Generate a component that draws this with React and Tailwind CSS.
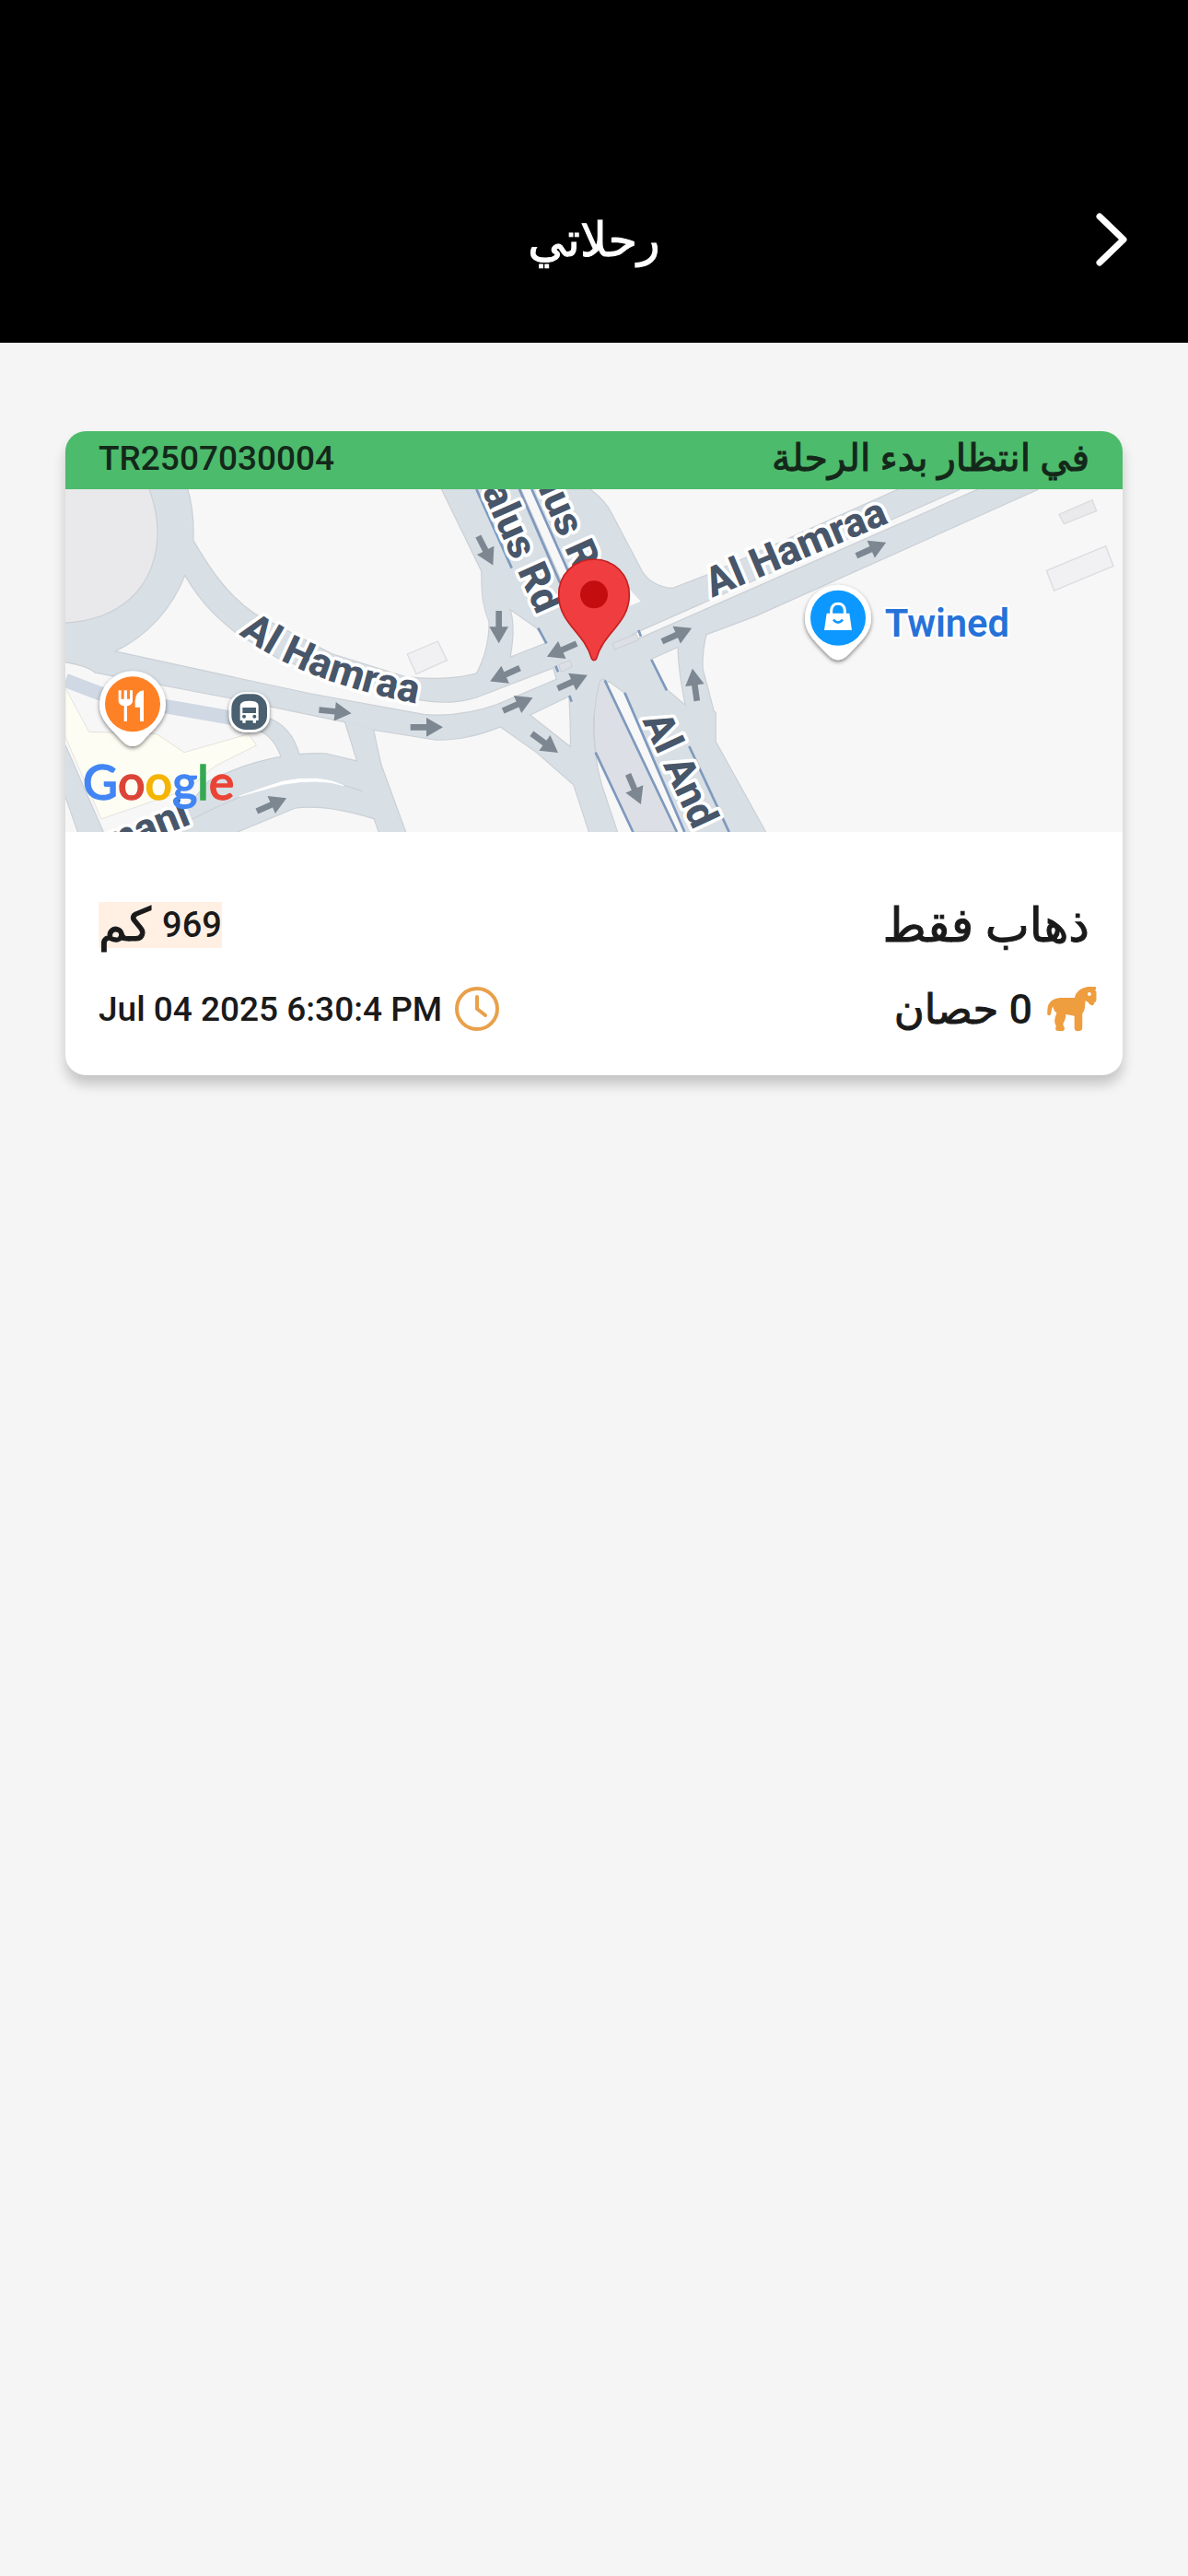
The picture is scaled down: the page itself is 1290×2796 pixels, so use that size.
const ROADS = [
  'M308 213 Q340 300 334 380 C320 540 210 640 33 650 V775 Q100 785 130 808 L200 822 L190 742 C300 690 380 600 422 490 C480 590 540 640 590 680 L740 770 L1190 898 Q1290 915 1370 890 L1630 790 L1700 760 L1650 700 L1600 715 L1480 762 L1370 815 Q1270 840 1140 825 L900 750 L650 620 C560 560 500 470 448 380 Q452 290 430 213Z',
  'M160 735 L560 822 L830 880 L1200 948 Q1320 958 1440 915 L1700 805 L1800 800 L1675 885 L1550 945 L1450 985 Q1340 1030 1240 1028 L1035 995 L945 970 L560 890 L130 808Z',
  'M1260 213 L1390 480 C1390 560 1395 600 1415 645 Q1415 740 1370 820 L1480 765 Q1500 650 1478 600 L1570 665 L1610 720 L1640 760 L1760 770 L1800 640 L1650 520 L1515 213Z',
  'M1555 213 H1740 Q1790 250 1810 290 L1910 480 Q1940 530 2010 537 L2120 495 L2750 213 H2945 L1910 670 L1820 710 L1740 700 L1680 500Z',
  'M1740 800 L1800 740 L1915 695 L3010 213 H3200 L2280 625 L2120 685 L1940 765 L1800 840Z',
  'M2030 722 Q2030 800 2055 920 L2080 980 L2150 960 Q2130 880 2108 800 Q2105 740 2120 685Z',
  'M1880 770 L1940 765 L1990 865 L2055 920 L2150 940 V1035 L2313 1329 H2050 L1855 875 L1780 820Z',
  'M1450 985 L1570 1070 L1690 1175 L1740 1329 H1830 L1780 1180 Q1750 1080 1752 960 L1775 835 L1700 760 L1675 885 Q1680 960 1680 1055 L1540 945Z',
  'M1600 715 L1850 640 L1930 770 L1785 832 L1750 860 L1640 850Z',
  'M945 970 L985 1100 L1040 1285 L1055 1329 H1140 L1060 1110 L1035 995Z',
  'M500 1165 Q690 1070 880 1075 L985 1100 L1060 1110 L1080 1290 L1040 1285 Q880 1235 780 1250 L590 1329 H380 L430 1250Z',
  'M33 1050 L155 1329 H75 L33 1210Z',
  'M690 958 Q770 985 795 1082 L740 1095 Q720 1020 660 995Z',
];

const ARROWS = [
  [912, 937, 6], [1210, 988, 0], [705, 1240, -24], [1402, 413, 63], [1445, 662, 90],
  [1650, 737, 156], [1465, 817, 156], [1685, 840, -24], [1507, 913, -24], [1595, 1040, 36],
  [2025, 687, -24], [2083, 850, -98], [1887, 1190, 67], [2658, 408, -24],
];

const LANE_LINES =
  'M1372 213 L1487 470 M1512 213 L1645 520 M1552 213 L1675 490 M1573 665 L1600 715 M1630 788 L1638 808 M1675 885 L1682 905 M1900 672 L1908 692 M1942 768 L1992 868 M1790 835 L2025 1329 M1855 875 L2050 1329 M2065 1050 L2195 1329 M1760 1070 L1882 1329';

function PlacePin({ x, y, color, children }) {
  return (
    <g transform={`translate(${x} ${y})`}>
      <path
        d="M0 -108 A108 108 0 0 1 108 0 C108 50 75 75 35 118 Q0 156 -35 118 C-75 75 -108 50 -108 0 A108 108 0 0 1 0 -108Z"
        fill="#fff"
        filter="url(#pinShadow)"
      />
      <circle r="90" fill={color} />
      {children}
    </g>
  );
}

function TripMap() {
  return (
    <svg viewBox="33 213 3444 1116" direction="ltr" className="block w-full [direction:ltr]" role="img" aria-label="Google map">
      <defs>
        <filter id="pinShadow" x="-30%" y="-30%" width="160%" height="160%">
          <feDropShadow dx="0" dy="6" stdDeviation="7" floodColor="#000" floodOpacity="0.5" />
        </filter>
        <path id="hamraaWest" d="M598 684 Q820 855 1260 925" />
      </defs>
      <rect x="33" y="213" width="3444" height="1116" fill="#f7f7f8" />
      <path d="M33 213 H308 Q340 300 334 380 C320 540 210 640 33 650Z" fill="#e9e9eb" />
      <path
        d="M33 860 L110 1003 L330 1010 L420 1070 L630 1010 L655 1047 L520 1115 L430 1190 L150 1287 L33 1020Z"
        fill="#fefdf3"
        stroke="#e4e3dc"
        strokeWidth="3"
      />
      <path d="M33 835 L145 878 L360 920 L600 962 L690 985" fill="none" stroke="#cfd8e3" strokeWidth="46" />
      <g fill="#f1f1f3" stroke="#dcdce0" strokeWidth="4">
        <path d="M1147 750 L1246 708 L1276 770 L1176 815Z" />
        <path d="M3270 295 L3378 248 L3392 284 L3286 326Z" fill="#eaeaec" />
        <path d="M3229 478 L3422 398 L3447 463 L3254 543Z" />
      </g>
      <g fill="#d8dfe5" stroke="#cbd0d5" strokeWidth="7" strokeLinejoin="round">
        {ROADS.map((d) => <path key={d} d={d} />)}
      </g>
      <g fill="#d8dfe5">
        {ROADS.map((d) => <path key={d} d={d} />)}
      </g>
      <path d="M1775 835 L1790 832 L2025 1329 H1882 L1760 1070 Q1745 940 1775 835Z" fill="#dcdfe5" stroke="#c9ced4" strokeWidth="3" />
      <path d="M1872 540 L1907 578 L1860 598Z" fill="#fafafa" />
      <path d="M1815 715 L1893 684 L1900 704 L1822 735Z M1640 785 L1676 770 L1684 790 L1648 808Z" fill="#dcdfe4" stroke="#cbd0d5" strokeWidth="3" />
      <path d="M440 1290 Q600 1210 720 1170 Q860 1140 1000 1196" fill="none" stroke="#c8cdd3" strokeWidth="3" />
      <path d="M600 1213 Q690 1180 740 1165 Q860 1140 940 1178 Q860 1152 740 1174Z" fill="#fff" stroke="#fff" strokeWidth="3" />
      <path d={LANE_LINES} fill="none" stroke="#7f99bd" strokeWidth="8" />
      <g fill="#7c8791">
        {ARROWS.map(([x, y, a]) => (
          <path key={`${x}-${y}`} transform={`translate(${x} ${y}) rotate(${a})`} d="M-53 -10 H-1 V-31 L53 0 L-1 31 V10 H-53Z" />
        ))}
      </g>
      <g
        className="font-['Roboto',sans-serif] font-extrabold"
        fontSize="133"
        fill="#48566a"
        stroke="#fff"
        strokeWidth="22"
        strokeLinejoin="round"
        paintOrder="stroke"
      >
        <text><textPath href="#hamraaWest">Al Hamraa</textPath></text>
        <text transform="translate(2140 566) rotate(-23)">Al Hamraa</text>
        <text transform="translate(1570 624) rotate(66)" textAnchor="end">alus Rd</text>
        <text transform="translate(1724 550) rotate(66)" textAnchor="end">lus Rd</text>
        <text transform="translate(1912 966) rotate(65)">Al And</text>
        <text transform="translate(446 1302) rotate(-22)" textAnchor="end">mani</text>
      </g>
      <text x="90" y="1224" fontSize="156" strokeWidth="4" className="font-['Lato',sans-serif] font-medium">
        <tspan fill="#4285f4" stroke="#4285f4">G</tspan>
        <tspan fill="#db4437" stroke="#db4437">o</tspan>
        <tspan fill="#f4b400" stroke="#f4b400">o</tspan>
        <tspan fill="#4285f4" stroke="#4285f4">g</tspan>
        <tspan fill="#34a853" stroke="#34a853">l</tspan>
        <tspan fill="#ea4335" stroke="#ea4335">e</tspan>
      </text>
      <PlacePin x={252} y={913} color="#ff8126">
        <g fill="#fff">
          <path d="M-46 -45 h9 v28 h9 v-28 h10 v28 h9 v-28 h9 v34 q0 13 -18 17 v50 h-10 v-50 q-18 -4 -18 -17Z" />
          <path d="M36 -45 V56 H24 V10 H8 V-10 Q10 -42 36 -45Z" />
        </g>
      </PlacePin>
      <PlacePin x={2550} y={632} color="#0c98ff">
        <path d="M-37 -15 H37 L45 40 H-45Z" fill="#fff" />
        <path d="M-22 -12 V-24 Q-20 -46 0 -46 Q20 -46 22 -24 V-12" fill="none" stroke="#fff" strokeWidth="9" />
        <path d="M-15 6 Q0 24 15 6" fill="none" stroke="#0c98ff" strokeWidth="8" />
      </PlacePin>
      <g transform="translate(632 938)">
        <rect x="-66" y="-64" width="132" height="130" rx="52" fill="#fff" filter="url(#pinShadow)" />
        <rect x="-58" y="-58" width="116" height="116" rx="46" fill="#4a6070" />
        <path d="M-30 28 V-20 Q-30 -36 0 -36 Q30 -36 30 -20 V28 H22 V36 H12 V28 H-12 V36 H-22 V28Z" fill="#fff" />
        <path d="M-22 -14 H22 V4 H-22Z" fill="#4a6070" />
        <circle cx="-17" cy="15" r="6" fill="#4a6070" />
        <circle cx="17" cy="15" r="6" fill="#4a6070" />
      </g>
      <text
        x="2702"
        y="693"
        fontSize="125"
        fill="#2672d9"
        stroke="#fff"
        strokeWidth="14"
        paintOrder="stroke"
        className="font-['Roboto',sans-serif] font-semibold"
      >
        Twined
      </text>
      <path
        d="M1755 441 C1820 441 1870 492 1870 557 C1870 650 1784 682 1763 764 Q1755 776 1747 764 C1726 682 1640 650 1640 557 C1640 492 1690 441 1755 441Z"
        fill="#f03e40"
        stroke="#c5201f"
        strokeWidth="5"
      />
      <circle cx="1755" cy="556" r="45" fill="#c30d0e" />
    </svg>
  );
}

function HorseIcon() {
  return (
    <svg viewBox="0 0 162 145" className="h-12 w-[54px]" fill="#ee9d3f" aria-hidden="true">
      <path
        fillRule="evenodd"
        d="M158 0 H132 Q94 8 90 36 H42 Q14 38 4 58 Q0 68 0 90 Q1 95 8 94 Q13 92 13 84 Q13 72 19 64 Q20 78 31 86 Q24 102 24 112 Q24 120 29 128 L27 138 Q28 145 35 145 H51 Q59 142 56 134 Q51 126 52 120 Q60 110 61 91 Q74 93 89 96 V136 Q90 145 98 145 H107 Q115 143 115 135 V88 Q124 78 124 57 L125 46 L133 50 Q138 60 146 61 Q155 60 154 52 Q161 50 161 43 V16 Q160 13 156 12 Q162 9 160 3Z M138 18 A6 6 0 1 0 138.1 18Z"
      />
    </svg>
  );
}

function ClockIcon() {
  return (
    <svg viewBox="0 0 48 48" className="size-12" fill="none" stroke="#e9a04b" strokeWidth="4" strokeLinecap="round" strokeLinejoin="round" aria-hidden="true">
      <circle cx="24" cy="24" r="22" />
      <path d="M24 11 V24 L33 31" />
    </svg>
  );
}

export default function App() {
  return (
    <div dir="rtl" lang="ar" className="min-h-screen bg-[#f5f5f5] font-['Roboto','DejaVu_Sans',sans-serif] font-medium text-[#1a1a1a]">
      <header className="grid grid-cols-[1fr_auto_1fr] items-center bg-black px-[51px] pt-[168px] pb-5 text-white">
        <button type="button" aria-label="رجوع" className="flex h-[184px] w-16 items-center justify-center">
          <svg viewBox="0 0 34 58" className="h-[58px] w-[34px]" fill="none" stroke="currentColor" strokeWidth="7" strokeLinecap="round" strokeLinejoin="round" aria-hidden="true">
            <path d="M4 4 L30 29 L4 54" />
          </svg>
        </button>
        <h1 className="text-[51px] leading-none [-webkit-text-stroke:1px]">رحلاتي</h1>
      </header>
      <main className="px-[71px] pt-24">
        <article className="overflow-hidden rounded-[22px] bg-white shadow-[0_10px_14px_rgba(0,0,0,0.2)]">
          <div className="flex h-[63px] items-center justify-between bg-[#4cbb6c] px-9 pb-1 leading-none text-[#14281a]">
            <h2 className="text-[41px] [-webkit-text-stroke:1px]">في انتظار بدء الرحلة</h2>
            <span dir="ltr" className="text-[37px]">TR2507030004</span>
          </div>
          <TripMap />
          <div className="flex flex-col gap-10 px-9 pt-[74px] pb-12 text-[37px]">
            <div className="flex h-[54px] items-center justify-between">
              <span className="text-[51px] leading-none [-webkit-text-stroke:1px]">ذهاب فقط</span>
              <span className="flex h-[50px] items-center gap-3 bg-[#fff0e3] leading-none">
                <span className="text-[38px]">969</span>
                <span className="text-[50px] [-webkit-text-stroke:1px]">كم</span>
              </span>
            </div>
            <div className="flex items-center justify-between">
              <span className="-ms-2 flex items-center gap-4 text-[45px] leading-none">
                <HorseIcon />
                <span><span>0</span> <span className="[-webkit-text-stroke:1px]">حصان</span></span>
              </span>
              <time dir="ltr" className="flex items-center gap-3.5 leading-none">
                Jul 04 2025 6:30:4 PM
                <ClockIcon />
              </time>
            </div>
          </div>
        </article>
      </main>
    </div>
  );
}
